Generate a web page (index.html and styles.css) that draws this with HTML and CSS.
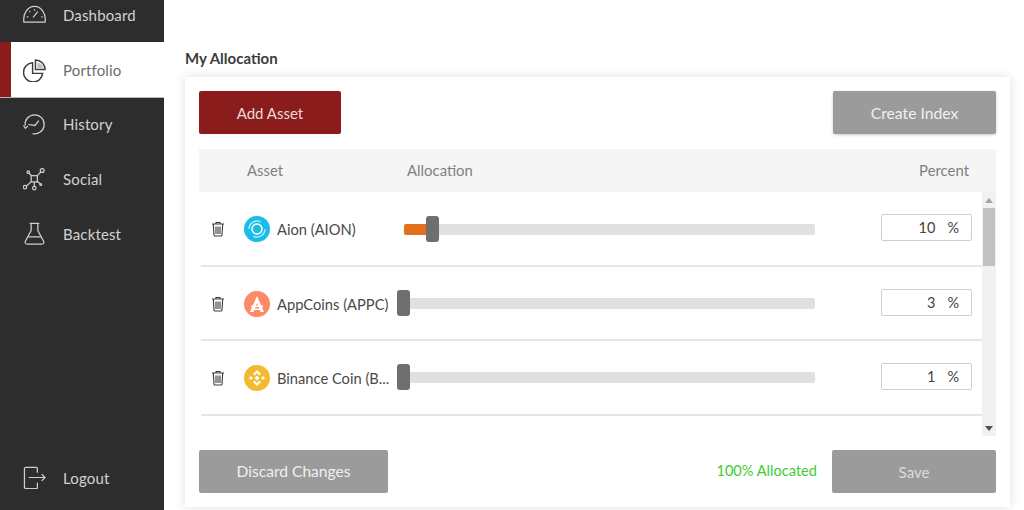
FILE: index.html
```html
<!DOCTYPE html>
<html lang="en">
<head>
<meta charset="utf-8">
<title>Portfolio</title>
<link rel="stylesheet" href="styles.css">
</head>
<body>
<div class="app">
  <aside class="sidebar">
    <nav class="nav">
      <a class="nav-item">
        <svg class="nav-icon" viewBox="0 0 24 24"><path d="M1 20c-1.500-9 4-16.500 11-16.500s12.500 7.500 11 16.500z"/><path d="M10.500 15l5-6M4 14.500h1.500M6.500 8.500l1 1M12 6.500v1.500M20.500 14.500h-1.500"/></svg>
        <span>Dashboard</span>
      </a>
      <a class="nav-item active">
        <svg class="nav-icon" viewBox="0 0 24 24"><path d="M10 4a10 10 0 1 0 10.500 11h-10.500z"/><path d="M13 1a10 10 0 0 1 10 10h-10z"/><path class="soft" d="M15 9.500V4a7 7 0 0 1 6 5.500z"/></svg>
        <span>Portfolio</span>
      </a>
      <a class="nav-item">
        <svg class="nav-icon" viewBox="0 0 24 24"><path d="M2.200 13A10 10 0 1 1 10 21.600"/><path d="M.5 13l2 3 2.500-2.500"/><path d="M5.500 12l7 1 4-5"/></svg>
        <span>History</span>
      </a>
      <a class="nav-item">
        <svg class="nav-icon" viewBox="0 0 24 24"><rect x="8.500" y="8" width="6.500" height="6.500"/><circle cx="5.500" cy="4.400" r="1.300"/><circle cx="20" cy="2.600" r="2"/><circle cx="2" cy="20" r="1.800"/><circle cx="11.800" cy="21" r="1.800"/><circle cx="18.500" cy="17.200" r="1"/><path d="M6.300 5.500L9 8M18.600 4L15 8M3.500 18.700L8.500 14.500M11.800 14.500v4.700M15 14l3 2.500"/></svg>
        <span>Social</span>
      </a>
      <a class="nav-item">
        <svg class="nav-icon" viewBox="0 0 24 24"><path d="M7 1.500h10M8.500 1.500v7.500L2.500 20c-.8 1.800 0 3 2 3h15c2 0 2.800-1.200 2-3l-6-11V1.500"/><path d="M5.500 15.500h13"/></svg>
        <span>Backtest</span>
      </a>
    </nav>
    <a class="nav-item logout">
      <svg class="nav-icon" viewBox="0 0 24 24"><path d="M15 7V2.500c0-.8-.5-1-1-1H3c-.8 0-1.500.5-1.500 1.500v19c0 .8.500 1.500 1.500 1.500h11c.5 0 1-.5 1-1v-5"/><path d="M6 12h17M19.500 8.500L23 12l-3.500 3.500"/></svg>
      <span>Logout</span>
    </a>
  </aside>
  <main class="main">
    <h2 class="title">My Allocation</h2>
    <section class="card">
      <div class="bar">
        <button class="btn primary add">Add Asset</button>
        <button class="btn muted create">Create Index</button>
      </div>
      <div class="head">
        <span class="h-asset">Asset</span>
        <span class="h-alloc">Allocation</span>
        <span class="h-pct">Percent</span>
      </div>
      <div class="list-wrap">
        <div class="list">
          <div class="row">
            <svg class="trash" viewBox="0 0 14 16"><path d="M1 3h12M5 3V1.500h4V3M2.300 3l.7 11c0 .6.4 1 1 1h6c.6 0 1-.4 1-1l.7-11M5 5.500v7.500M7 5.500v7.500M9 5.500v7.500"/></svg>
            <svg class="coin" viewBox="0 0 26 26"><circle cx="13" cy="13" r="13" fill="#18bde8"/><circle cx="13" cy="13" r="5" fill="none" stroke="#fff" stroke-width="1.500"/><path d="M5 13a8 8 0 0 1 11.500-7.200M21 13a8 8 0 0 1-11.500 7.200" fill="none" stroke="#bfeefa" stroke-width="1.300"/></svg>
            <span class="name">Aion (AION)</span>
            <div class="slider"><div class="fill"></div><div class="thumb at-10"></div></div>
            <div class="pct"><span class="val">10</span><span class="sym">%</span></div>
          </div>
          <div class="row">
            <svg class="trash" viewBox="0 0 14 16"><path d="M1 3h12M5 3V1.500h4V3M2.300 3l.7 11c0 .6.4 1 1 1h6c.6 0 1-.4 1-1l.7-11M5 5.500v7.500M7 5.500v7.500M9 5.500v7.500"/></svg>
            <svg class="coin" viewBox="0 0 26 26"><circle cx="13" cy="13" r="13" fill="#fd8a66"/><path d="M13 5L6 21h3.500L13 12l3.500 9H20z" fill="#fff"/><path d="M7 14.500h12v1.500H7zM7 17.500h12V19H7z" fill="#fff"/></svg>
            <span class="name">AppCoins (APPC)</span>
            <div class="slider"><div class="thumb"></div></div>
            <div class="pct"><span class="val">3</span><span class="sym">%</span></div>
          </div>
          <div class="row">
            <svg class="trash" viewBox="0 0 14 16"><path d="M1 3h12M5 3V1.500h4V3M2.300 3l.7 11c0 .6.4 1 1 1h6c.6 0 1-.4 1-1l.7-11M5 5.500v7.500M7 5.500v7.500M9 5.500v7.500"/></svg>
            <svg class="coin" viewBox="0 0 26 26"><circle cx="13" cy="13" r="13" fill="#f3ba2f"/><path d="M13 5l4 4-1.500 1.500L13 8l-2.500 2.500L9 9zM13 21l4-4-1.500-1.500L13 18l-2.500-2.500L9 17zM5 13l2-2 2 2-2 2zM21 13l-2-2-2 2 2 2zM13 10.500l2.500 2.500-2.500 2.500-2.500-2.500z" fill="#fff"/></svg>
            <span class="name">Binance Coin (B...</span>
            <div class="slider"><div class="thumb"></div></div>
            <div class="pct"><span class="val">1</span><span class="sym">%</span></div>
          </div>
        </div>
        <div class="scrollbar">
          <span class="arrow up"></span>
          <span class="sb-thumb"></span>
          <span class="arrow down"></span>
        </div>
      </div>
      <div class="foot">
        <button class="btn muted discard">Discard Changes</button>
        <span class="status">100% Allocated</span>
        <button class="btn muted save">Save</button>
      </div>
    </section>
  </main>
</div>
</body>
</html>
```

FILE: styles.css
```css
* { box-sizing: border-box; }
html, body { margin: 0; height: 510px; overflow: hidden; background: #fff; }
body { font-family: Lato, "Liberation Sans", sans-serif; }
.app { display: flex; height: 510px; }

.sidebar { width: 164px; flex: none; background: #2d2d2d; display: flex; flex-direction: column; justify-content: space-between; overflow: hidden; }
.nav { margin-top: -12.700px; display: flex; flex-direction: column; }
.nav-item { height: 54.800px; display: flex; align-items: center; gap: 17px; padding-left: 23px; color: #d2d2d2; font-size: 15px; letter-spacing: .15px; }
.nav-item.active { background: #fff; color: #6c6c6c; border-left: 11px solid #8a1c1c; padding-left: 12px; padding-top: 1px; box-shadow: 0 1px 0 #b9b9b9; }
.nav-icon { width: 23px; height: 23px; flex: none; fill: none; stroke: #cfcfcf; stroke-width: 1.300; }
.active .nav-icon { stroke: #3a3a3a; stroke-width: 1.500; }
.active .nav-icon .soft { fill: #bdbdbd; stroke: none; }
.logout { margin-bottom: 5px; }

.main { flex: 1; padding: 49px 14px 3px 21px; display: flex; flex-direction: column; min-width: 0; }
.title { margin: 0 0 10px; font-size: 15px; line-height: 18px; font-weight: 700; color: #3c3c3c; }
.card { height: 430px; background: #fff; box-shadow: 0 0 10px rgba(0,0,0,.13); padding: 14px; display: flex; flex-direction: column; }

.btn { height: 43px; border: 0; border-radius: 2px; color: #f0f0f0; font: 400 15px Lato, "Liberation Sans", sans-serif; padding: 0; }
.primary { background: #8a1c1c; color: #e9dada; }
.muted { background: #9b9b9b; }
.bar { display: flex; justify-content: space-between; }
.add { width: 142px; }
.create { width: 163px; font-size: 15.700px; box-shadow: 0 1px 3px rgba(0,0,0,.2); }

.head { margin-top: 15px; height: 43px; padding-bottom: 1px; background: #f5f5f5; display: flex; align-items: center; font-size: 14.900px; color: #808080; }
.h-asset { margin-left: 48px; width: 160px; }
.h-alloc { flex: 1; }
.h-pct { margin-right: 27px; }

.list-wrap { height: 244px; display: flex; overflow: hidden; }
.list { flex: 1; min-width: 0; overflow: hidden; padding: .5px 0 0 2px; }
.row { height: 74.400px; padding-top: 1px; display: flex; align-items: center; border-bottom: 2px solid #e6e6e6; }
.trash { width: 14px; height: 16px; margin-left: 10px; flex: none; fill: none; stroke: #3c3c3c; stroke-width: 1.100; }
.coin { width: 26px; height: 26px; margin-left: 18.500px; flex: none; }
.name { width: 125px; margin-left: 7.500px; flex: none; font-size: 14.700px; color: #4a4a4a; white-space: nowrap; }
.slider { position: relative; width: 411px; height: 11px; margin-left: 2px; background: #e0e0e0; border-radius: 2px; flex: none; }
.fill { width: 24px; height: 100%; background: #e2711d; border-radius: 2px 0 0 2px; }
.thumb { position: absolute; top: -8px; left: -7px; width: 13px; height: 26px; background: #6f6f6f; border-radius: 3px; }
.thumb.at-10 { left: 22px; }
.pct { width: 91px; height: 27px; margin: 0 0 3px 66px; flex: none; border: 1px solid #cfcfcf; border-radius: 2px; display: flex; align-items: center; justify-content: flex-end; padding-right: 12px; font-size: 14.500px; color: #444; }
.val { margin-right: 12px; }

.scrollbar { width: 14px; flex: none; background: #f1f1f1; display: flex; flex-direction: column; align-items: center; }
.arrow { width: 0; height: 0; border-left: 4px solid transparent; border-right: 4px solid transparent; }
.arrow.up { margin: 6px 0 5px; border-bottom: 5px solid #a3a3a3; }
.arrow.down { margin-top: auto; margin-bottom: 5px; border-top: 5px solid #505050; }
.sb-thumb { width: 12px; height: 58px; background: #c1c1c1; }

.foot { margin-top: 14px; display: flex; align-items: center; }
.discard { width: 189px; font-size: 15.600px; padding-bottom: 2px; }
.status { margin-left: auto; margin-right: 15px; padding-bottom: 3px; font-size: 14.600px; color: #3ecb35; }
.save { width: 164px; color: #dcdcdc; }
```
